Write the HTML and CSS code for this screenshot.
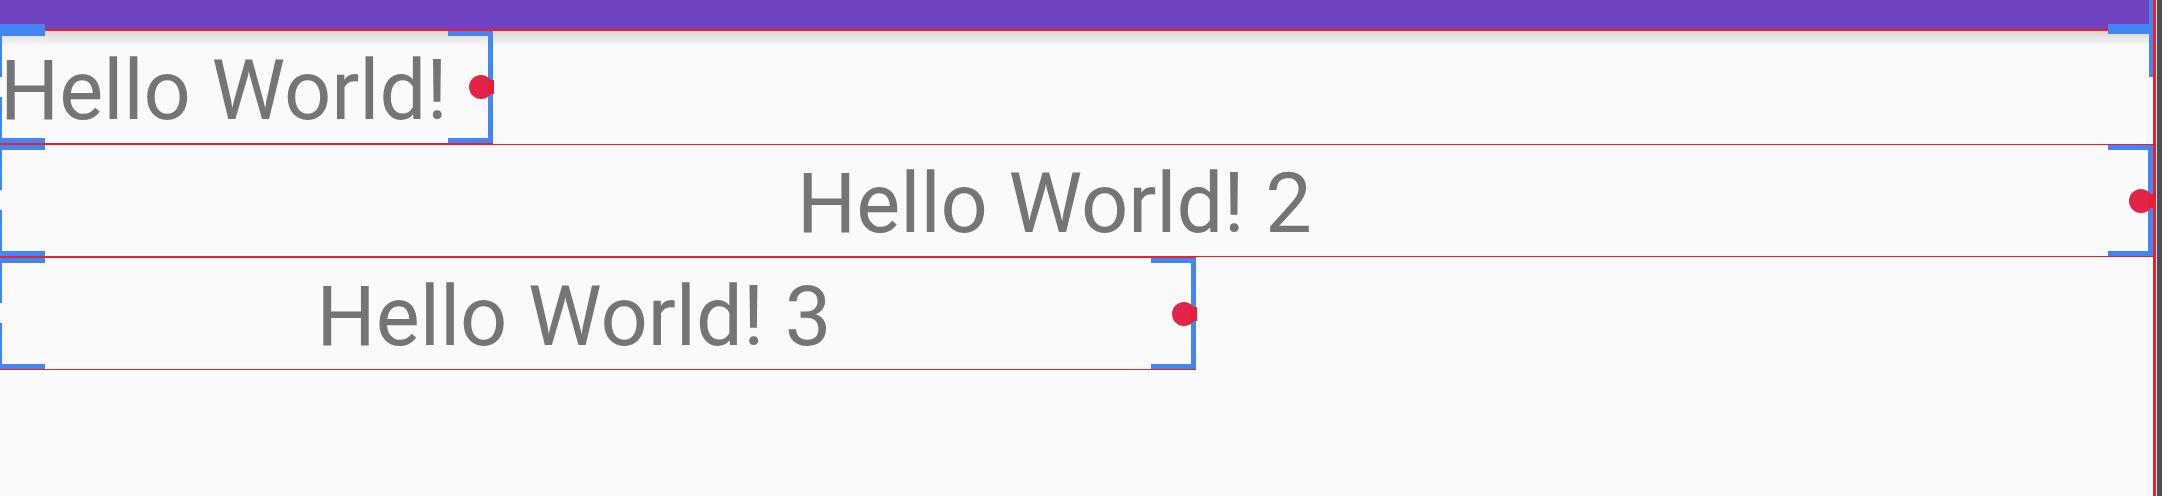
FILE: index.html
```html
<!DOCTYPE html>
<html lang="en">

<head>
    <meta charset="UTF-8" />
    <meta name="viewport" content="width=device-width, initial-scale=1.0" />
    <title>Layout preview</title>
    <link rel="stylesheet" href="styles.css">
</head>

<body>
    <div class="device">
        <div class="screen">
            <header class="appbar"></header>
            <main class="layout">
                <div class="view view-first">
                    <span class="label">Hello World!</span>
                    <span class="edge-left"></span>
                    <span class="edge-right"></span>
                    <span class="arm arm-tl"></span>
                    <span class="arm arm-bl"></span>
                    <span class="arm arm-tr"></span>
                    <span class="arm arm-br"></span>
                    <span class="anchor"></span>
                </div>
                <div class="view view-wide">
                    <span class="label">Hello World! 2</span>
                    <span class="edge-left"></span>
                    <span class="edge-right"></span>
                    <span class="arm arm-tl"></span>
                    <span class="arm arm-bl"></span>
                    <span class="arm arm-tr"></span>
                    <span class="arm arm-br"></span>
                    <span class="anchor"></span>
                </div>
                <div class="view view-half">
                    <span class="label">Hello World! 3</span>
                    <span class="edge-left"></span>
                    <span class="edge-right"></span>
                    <span class="arm arm-tl"></span>
                    <span class="arm arm-bl"></span>
                    <span class="arm arm-tr"></span>
                    <span class="arm arm-br"></span>
                    <span class="anchor"></span>
                </div>
            </main>
        </div>
        <div class="bezel"></div>

        <!-- parent layout selection handles -->
        <span class="parent-arm parent-arm-left"></span>
        <span class="parent-arm parent-arm-right"></span>
        <span class="parent-edge"></span>
    </div>
</body>

</html>
```

FILE: styles.css
```css
* {
    box-sizing: border-box;
}

body {
    margin: 0;
    background-color: rgb(250, 250, 250);
    font-family: Roboto, "Noto Sans", sans-serif;
}

.device {
    position: relative;
    display: flex;
    height: 496px;
    overflow: hidden;
}

.screen {
    width: 2156px;
    border-right: 3px solid rgb(240, 30, 40);
    display: flex;
    flex-direction: column;
}

.bezel {
    width: 6px;
    border-left: 1px solid rgb(232, 232, 232);
    background-color: rgb(75, 79, 79);
}

.appbar {
    flex: none;
    height: 29px;
    background-color: rgb(111, 67, 193);
}

.layout {
    flex: 1;
    border-top: 2px solid rgb(240, 30, 40);
    background-image: linear-gradient(rgb(214, 214, 214), rgba(250, 250, 250, 0) 15px);
    background-repeat: no-repeat;
}

/* text views */

.view {
    position: relative;
    display: flex;
    align-items: center;
    height: 113px;
    border-top: 1px solid rgb(240, 30, 40);
    border-bottom: 1px solid rgb(240, 30, 40);
}

.view-first {
    width: 493px;
    border-top: 0;
}

.view-wide {
    width: 2153px;
    justify-content: center;
    padding-right: 44px;
}

.view-half {
    width: 1196px;
    justify-content: center;
    padding-right: 48px;
}

.label {
    font-size: 83px;
    line-height: 1;
    color: rgb(117, 117, 117);
    padding-top: 6px;
    white-space: nowrap;
}

/* selection handles */

.edge-left {
    position: absolute;
    top: 0;
    bottom: 0;
    left: 0;
    width: 2px;
    background-image: linear-gradient(rgb(66, 133, 244) calc(50% - 10px), transparent calc(50% - 10px), transparent calc(50% + 10px), rgb(66, 133, 244) calc(50% + 10px));
}

.edge-right {
    position: absolute;
    top: 0;
    bottom: 0;
    right: 0;
    width: 5px;
    background-color: rgb(66, 133, 244);
}

.arm {
    position: absolute;
    width: 45px;
    height: 5px;
    background-color: rgb(66, 133, 244);
}

.arm-tl {
    top: 0;
    left: 0;
}

.arm-bl {
    bottom: 0;
    left: 0;
}

.arm-tr {
    top: 0;
    right: 0;
}

.arm-br {
    bottom: 0;
    right: 0;
}

.anchor {
    position: absolute;
    top: 50%;
    right: -1px;
    width: 25px;
    height: 24px;
    margin-top: -12px;
}

.anchor::before {
    content: "";
    position: absolute;
    left: 0;
    top: 0;
    width: 24px;
    height: 24px;
    border-radius: 50%;
    background-color: rgb(226, 36, 72);
}

.anchor::after {
    content: "";
    position: absolute;
    right: 0;
    top: 5px;
    width: 6px;
    height: 14px;
    background-color: rgb(232, 30, 50);
}

.parent-arm {
    position: absolute;
    top: 24px;
    width: 45px;
    height: 10px;
    background-color: rgb(66, 133, 244);
}

.parent-arm-left {
    left: 0;
}

.parent-arm-right {
    left: 2108px;
}

.parent-edge {
    position: absolute;
    top: 0;
    left: 2149px;
    width: 4px;
    height: 77px;
    background-color: rgb(66, 133, 244);
}
```
